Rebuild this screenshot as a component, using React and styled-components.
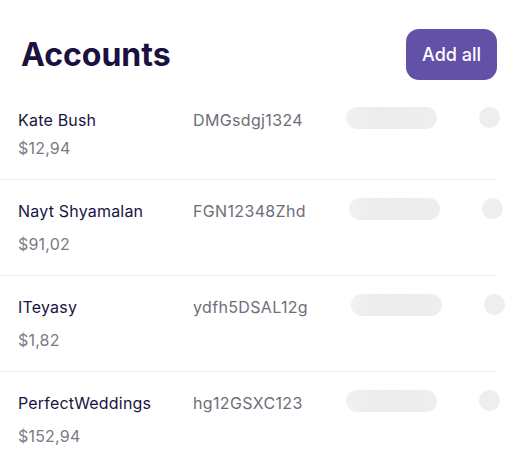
import React from "react";
import styled, { createGlobalStyle } from "styled-components";

const accounts = [
  { name: "Kate Bush", amount: "$12,94", code: "DMGsdgj1324" },
  { name: "Nayt Shyamalan", amount: "$91,02", code: "FGN12348Zhd" },
  { name: "ITeyasy", amount: "$1,82", code: "ydfh5DSAL12g" },
  { name: "PerfectWeddings", amount: "$152,94", code: "hg12GSXC123" },
];

export default function App() {
  return (
    <>
      <GlobalStyle />
      <Panel>
        <Header>
          <Title>Accounts</Title>
          <AddButton>Add all</AddButton>
        </Header>
        <List>
          {accounts.map((item, i) => (
            <Row
              key={item.code}
              first={i === 0}
              last={i === accounts.length - 1}
            >
              <Person first={i === 0}>
                <Name>{item.name}</Name>
                <Amount>{item.amount}</Amount>
              </Person>
              <Code>{item.code}</Code>
              <SkeletonBar />
              <SkeletonDot />
            </Row>
          ))}
        </List>
      </Panel>
    </>
  );
}

const GlobalStyle = createGlobalStyle`
  body {
    margin: 0;
    background: #ffffff;
    font-family: Inter, "Noto Sans", sans-serif;
  }
`;

const Panel = styled.div`
  width: 497px;
  background: #fff;
`;

const Header = styled.div`
  display: flex;
  align-items: center;
  justify-content: space-between;
  padding: 29px 0 4px 21px;
`;

const Title = styled.h1`
  margin: 0;
  font-size: 32px;
  font-weight: 700;
  color: #1b1140;
`;

const AddButton = styled.button`
  height: 51px;
  padding: 0 16px;
  border: none;
  border-radius: 13px;
  background: #6251a7;
  color: #fff;
  font-family: Inter, sans-serif;
  font-size: 18px;
  font-weight: 500;
`;

const List = styled.div`
  display: flex;
  flex-direction: column;
`;

const Row = styled.div`
  display: flex;
  align-items: flex-start;
  padding: ${(p) => (p.first ? "24px 0 19px 18px" : "19px 0 19px 18px")};
  border-bottom: ${(p) => (p.last ? "none" : "1px solid #eeeeee")};
`;

const Person = styled.div`
  display: flex;
  flex-direction: column;
  gap: ${(p) => (p.first ? "4px" : "9px")};
  width: 175px;
  flex: none;
`;

const Name = styled.div`
  font-size: 16px;
  line-height: 24px;
  font-weight: 400;
  letter-spacing: 0.2px;
  color: #1a1440;
`;

const Amount = styled.div`
  font-size: 16px;
  line-height: 24px;
  letter-spacing: 0.2px;
  color: #7b7a85;
`;

const Code = styled.div`
  flex: none;
  font-size: 16px;
  line-height: 24px;
  letter-spacing: 0.35px;
  color: #6f6d7a;
  margin-right: 43px;
`;

const SkeletonBar = styled.div`
  flex: none;
  width: 91px;
  height: 22px;
  margin-top: -1px;
  border-radius: 11px;
  background: linear-gradient(90deg, #f1f1f1 0%, #ececec 30%, #eeeeee 100%);
  margin-right: 42px;
`;

const SkeletonDot = styled.div`
  flex: none;
  width: 21px;
  height: 21px;
  margin-top: -1px;
  border-radius: 50%;
  background: #eeeeee;
`;
